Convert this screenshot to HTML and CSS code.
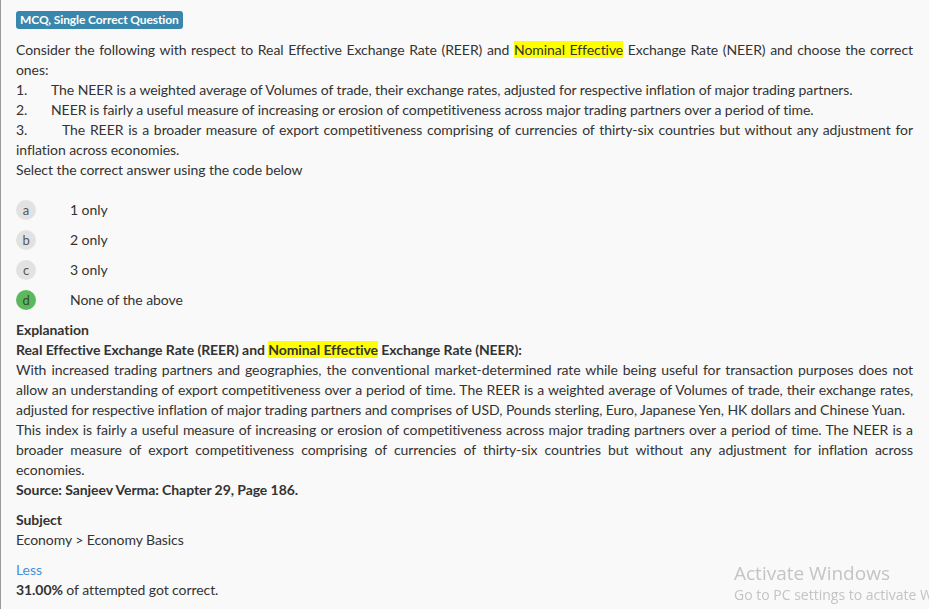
FILE: index.html
```html
<!DOCTYPE html>
<html>
<head>
<meta charset="utf-8">
<link rel="stylesheet" href="styles.css">
</head>
<body>
<div class="question">
  <div class="badge-row"><span class="badge">MCQ, Single Correct Question</span></div>
  <div class="stem">
    <p class="just">Consider the following with respect to Real Effective Exchange Rate (REER) and <span class="hl">Nominal Effective</span> Exchange Rate (NEER) and choose the correct ones:</p>
    <p class="just"><span class="num">1.</span>The NEER is a weighted average of Volumes of trade, their exchange rates, adjusted for respective inflation of major trading partners.</p>
    <p class="just"><span class="num">2.</span>NEER is fairly a useful measure of increasing or erosion of competitiveness across major trading partners over a period of time.</p>
    <p class="just"><span class="num wide">3.</span>The REER is a broader measure of export competitiveness comprising of currencies of thirty-six countries but without any adjustment for inflation across economies.</p>
    <p>Select the correct answer using the code below</p>
  </div>
  <ul class="options">
    <li class="option"><span class="circle">a</span><span class="opt-text">1 only</span></li>
    <li class="option"><span class="circle">b</span><span class="opt-text">2 only</span></li>
    <li class="option"><span class="circle">c</span><span class="opt-text">3 only</span></li>
    <li class="option"><span class="circle correct">d</span><span class="opt-text">None of the above</span></li>
  </ul>
  <div class="explanation">
    <p class="bold">Explanation</p>
    <p class="bold">Real Effective Exchange Rate (REER) and <span class="hl">Nominal Effective</span> Exchange Rate (NEER):</p>
    <p class="just">With increased trading partners and geographies, the conventional market-determined rate while being useful for transaction purposes does not allow an understanding of export competitiveness over a period of time. The REER is a weighted average of Volumes of trade, their exchange rates, adjusted for respective inflation of major trading partners and comprises of USD, Pounds sterling, Euro, Japanese Yen, HK dollars and Chinese Yuan.</p>
    <p class="just">This index is fairly a useful measure of increasing or erosion of competitiveness across major trading partners over a period of time. The NEER is a broader measure of export competitiveness comprising of currencies of thirty-six countries but without any adjustment for inflation across economies.</p>
    <p class="bold">Source: Sanjeev Verma: Chapter 29, Page 186.</p>
  </div>
  <div class="subject">
    <p class="bold">Subject</p>
    <p>Economy &gt; Economy Basics</p>
  </div>
  <div class="stats">
    <p><a class="less" href="#">Less</a></p>
    <p><b>31.00%</b> of attempted got correct.</p>
  </div>
</div>
<div class="watermark">
  <div class="wm-title">Activate Windows</div>
  <div class="wm-sub">Go to PC settings to activate Windows.</div>
</div>
</body>
</html>
```
FILE: styles.css
```css
html, body {
  margin: 0;
  padding: 0;
  background: #f9f9f9;
  overflow: hidden;
}
body {
  font-family: Lato, "Liberation Sans", sans-serif;
  font-size: 14px;
  letter-spacing: -0.07px;
  line-height: 20px;
  color: #333;
}
p { margin: 0; }
.question {
  border-left: 1px solid #9a9a9a;
  padding: 10px 16px 9px 15px;
  min-height: 590px;
}
.badge-row {
  height: 18px;
  line-height: 18px;
  margin-bottom: 12px;
}
.badge {
  display: inline-block;
  background: #3a87ad;
  color: #fff;
  font-weight: bold;
  font-size: 12px;
  letter-spacing: -0.1px;
  line-height: 18px;
  padding: 0 4px;
  border-radius: 3px;
}
.just { text-align: justify; }
.hl { background: #ffff00; }
.num {
  display: inline-block;
  width: 35px;
}
.num.wide { width: 46px; }
.options {
  list-style: none;
  margin: 15px 0 5px 0;
  padding: 0;
}
.option {
  display: flex;
  align-items: center;
  height: 30px;
}
.circle {
  width: 20px;
  height: 20px;
  border-radius: 50%;
  background: #e2e2e2;
  color: #555;
  font-size: 13px;
  line-height: 20px;
  text-align: center;
  margin-right: 34px;
  flex: none;
}
.circle.correct {
  background: #5cb85c;
  color: #2f4f2f;
}
.bold { font-weight: bold; }
.subject { margin-top: 10px; }
.stats { margin-top: 10px; }
.less {
  color: #4a90d9;
  text-decoration: none;
}
.watermark {
  position: fixed;
  left: 734px;
  right: 0;
  top: 561px;
  overflow: hidden;
  white-space: nowrap;
  font-family: "Open Sans", "Noto Sans", sans-serif;
  letter-spacing: 0;
  color: #c4c4c4;
  pointer-events: none;
}
.wm-title {
  font-size: 19px;
  line-height: 24px;
}
.wm-sub {
  font-size: 14px;
  line-height: 20px;
}
```
